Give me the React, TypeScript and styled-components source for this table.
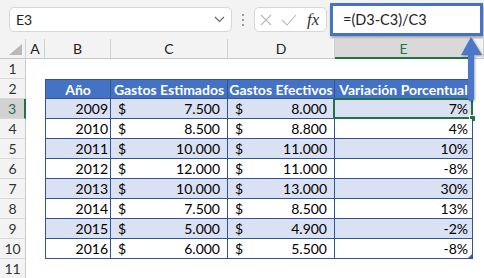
import React from 'react';
import styled, { createGlobalStyle } from 'styled-components';

const FONT = "Lato, 'Open Sans', 'Liberation Sans', sans-serif";
const COLS = '26px 19px 66px 117px 107px 138px 1fr';
const GREEN = '#217346';
const LINE = '#2f5597';

const GlobalStyle = createGlobalStyle`
  html, body {
    margin: 0;
    padding: 0;
    background: #fff;
  }
  body {
    font-family: ${FONT};
  }
`;

const Page = styled.div`
  position: relative;
  width: 484px;
  height: 278px;
  overflow: hidden;
  background: #fff;
`;

const Toolbar = styled.div`
  height: 39px;
  box-sizing: border-box;
  padding-left: 9px;
  display: flex;
  align-items: center;
  background: #f3f3f3;
`;

const NameBox = styled.div`
  width: 223px;
  height: 25px;
  box-sizing: border-box;
  padding: 0 6px;
  display: flex;
  align-items: center;
  justify-content: space-between;
  background: #fff;
  border: 1px solid #d6d6d6;
  border-radius: 5px;
  font-size: 14px;
  color: #222;
`;

const Dots = styled.div`
  width: 22px;
  display: flex;
  flex-direction: column;
  align-items: center;
  gap: 3px;

  span {
    width: 2px;
    height: 2px;
    background: #9a9a9a;
  }
`;

const FxBox = styled.div`
  width: 73px;
  height: 25px;
  box-sizing: border-box;
  padding: 0 5px 0 5px;
  display: flex;
  align-items: center;
  gap: 9px;
  background: #fff;
  border: 1px solid #d6d6d6;
  border-radius: 5px;
`;

const Fx = styled.span`
  font-family: 'Liberation Serif', 'DejaVu Serif', serif;
  font-style: italic;
  font-size: 17px;
  color: #333;
  margin-left: 1px;
`;

const FormulaHighlight = styled.div`
  margin-left: 3px;
  width: 153px;
  height: 33px;
  box-sizing: border-box;
  padding-left: 10px;
  display: flex;
  align-items: center;
  background: #fff;
  border: 3px solid #4472c4;
  box-shadow: 1px 2px 3px rgba(0, 0, 0, 0.35);
  font-size: 14.5px;
  color: #222;
`;

const Sheet = styled.div`
  display: flex;
  flex-direction: column;
`;

const SheetRow = styled.div`
  display: grid;
  grid-template-columns: ${COLS};
  height: 20px;
`;

const Corner = styled.div`
  display: flex;
  align-items: flex-end;
  justify-content: flex-end;
  padding: 0 3px 3px 0;
  box-sizing: border-box;
  background: #f3f3f3;
  border-right: 1px solid #d0d0d0;
  border-bottom: 1px solid #c8c8c8;
`;

const ColHead = styled.div<{ $active?: boolean }>`
  display: flex;
  align-items: center;
  justify-content: center;
  box-sizing: border-box;
  background: ${p => (p.$active ? '#d9d9d9' : '#f3f3f3')};
  color: ${p => (p.$active ? GREEN : '#222')};
  border-right: 1px solid #d0d0d0;
  border-bottom: ${p => (p.$active ? `2px solid ${GREEN}` : '1px solid #c8c8c8')};
  font-size: 14px;
`;

const RowHead = styled.div<{ $active?: boolean }>`
  display: flex;
  align-items: center;
  justify-content: center;
  box-sizing: border-box;
  background: ${p => (p.$active ? '#d2d2d2' : '#f3f3f3')};
  color: ${p => (p.$active ? '#1f6f5a' : '#333')};
  border-bottom: 1px solid #d8d8d8;
  border-right: ${p => (p.$active ? `2px solid ${GREEN}` : '1px solid #c8c8c8')};
  font-size: 14px;
`;

const Blank = styled.div``;

type Tone = 'head' | 'band' | 'plain';

const Cell = styled.div<{ $tone: Tone; $first?: boolean; $align?: string; $pad?: string }>`
  position: relative;
  display: flex;
  align-items: center;
  justify-content: ${p => p.$align ?? 'flex-end'};
  box-sizing: border-box;
  padding: ${p => p.$pad ?? '0 3px'};
  border-right: 1px solid ${LINE};
  border-bottom: 1px solid ${LINE};
  border-left: ${p => (p.$first ? `1px solid ${LINE}` : 'none')};
  border-top: ${p => (p.$tone === 'head' ? `1px solid ${LINE}` : 'none')};
  background: ${p => (p.$tone === 'head' ? '#4472c4' : p.$tone === 'band' ? '#d9e1f2' : '#fff')};
  color: ${p => (p.$tone === 'head' ? '#fff' : '#000')};
  font-weight: ${p => (p.$tone === 'head' ? 700 : 400)};
  font-size: 14px;
  white-space: nowrap;
`;

const Selected = styled.span`
  position: absolute;
  top: -1px;
  left: -2px;
  right: -1px;
  bottom: -1px;
  border: 2px solid ${GREEN};
  pointer-events: none;

  &::after {
    content: '';
    position: absolute;
    right: -4px;
    bottom: -4px;
    width: 5px;
    height: 5px;
    background: ${GREEN};
    outline: 1px solid #fff;
  }
`;

const ResizeMark = styled.span`
  position: absolute;
  right: 0;
  bottom: 0;
  width: 0;
  height: 0;
  border-left: 4px solid transparent;
  border-bottom: 4px solid #3b63b0;
`;

const Arrow = styled.svg`
  position: absolute;
  left: 458px;
  top: 35px;
  filter: drop-shadow(1px 1px 1px rgba(0, 0, 0, 0.35));
`;

type Row = { year: number; est: string; eff: string; pct: string };

const rows: Row[] = [
  { year: 2009, est: '7.500', eff: '8.000', pct: '7%' },
  { year: 2010, est: '8.500', eff: '8.800', pct: '4%' },
  { year: 2011, est: '10.000', eff: '11.000', pct: '10%' },
  { year: 2012, est: '12.000', eff: '11.000', pct: '-8%' },
  { year: 2013, est: '10.000', eff: '13.000', pct: '30%' },
  { year: 2014, est: '7.500', eff: '8.500', pct: '13%' },
  { year: 2015, est: '5.000', eff: '4.900', pct: '-2%' },
  { year: 2016, est: '6.000', eff: '5.500', pct: '-8%' },
];

const money = (tone: Tone, value: string) => (
  <Cell $tone={tone} $align="space-between" $pad="0 7px 0 7px">
    <span>$</span>
    <span>{value}</span>
  </Cell>
);

export default function App() {
  return (
    <Page>
      <GlobalStyle />
      <Toolbar>
        <NameBox>
          <span>E3</span>
          <svg width="11" height="7" viewBox="0 0 11 7">
            <polyline points="1,1 5.5,5.5 10,1" fill="none" stroke="#666" strokeWidth="1.2" />
          </svg>
        </NameBox>
        <Dots>
          <span />
          <span />
          <span />
        </Dots>
        <FxBox>
          <svg width="12" height="12" viewBox="0 0 12 12">
            <path d="M1 1 L11 11 M11 1 L1 11" stroke="#b8b8b8" strokeWidth="1.1" />
          </svg>
          <svg width="16" height="12" viewBox="0 0 16 12">
            <polyline points="1,6 6,11 15,1" fill="none" stroke="#b8b8b8" strokeWidth="1.1" />
          </svg>
          <Fx>fx</Fx>
        </FxBox>
        <FormulaHighlight>=(D3-C3)/C3</FormulaHighlight>
      </Toolbar>

      <Sheet>
        <SheetRow>
          <Corner>
            <svg width="13" height="11" viewBox="0 0 13 11">
              <polygon points="0,11 13,11 13,0" fill="#b9b9b9" />
            </svg>
          </Corner>
          <ColHead>A</ColHead>
          <ColHead>B</ColHead>
          <ColHead>C</ColHead>
          <ColHead>D</ColHead>
          <ColHead $active>E</ColHead>
          <ColHead />
        </SheetRow>

        <SheetRow>
          <RowHead>1</RowHead>
        </SheetRow>

        <SheetRow>
          <RowHead>2</RowHead>
          <Blank />
          <Cell $tone="head" $first $align="center">Año</Cell>
          <Cell $tone="head" $align="center">Gastos Estimados</Cell>
          <Cell $tone="head" $align="center">Gastos Efectivos</Cell>
          <Cell $tone="head" $align="center">Variación Porcentual</Cell>
        </SheetRow>

        {rows.map((r, i) => {
          const tone: Tone = i % 2 === 0 ? 'band' : 'plain';
          const last = i === rows.length - 1;
          return (
            <SheetRow key={r.year}>
              <RowHead $active={i === 0}>{i + 3}</RowHead>
              <Blank />
              <Cell $tone={tone} $first $pad="0 2px">{r.year}</Cell>
              {money(tone, r.est)}
              {money(tone, r.eff)}
              <Cell $tone={tone} $pad="0 4px">
                {r.pct}
                {i === 0 && <Selected />}
                {last && <ResizeMark />}
              </Cell>
            </SheetRow>
          );
        })}

        <SheetRow>
          <RowHead>11</RowHead>
        </SheetRow>
      </Sheet>

      <Arrow width="26" height="68" viewBox="458 35 26 68">
        <polygon points="471,37 482,55 461,55" fill="#4a77c9" />
        <path d="M468 54 H474 V98 A3 3 0 0 1 468 98 Z" fill="#4a77c9" />
      </Arrow>
    </Page>
  );
}
